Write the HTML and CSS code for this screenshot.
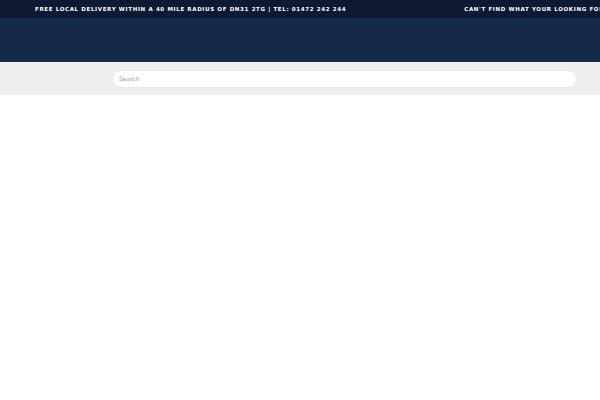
FILE: index.html
```html
<!DOCTYPE html>
<html>
<head>
<meta charset="utf-8">
<link rel="stylesheet" href="styles.css">
</head>
<body>
<div class="topbar">
  <span class="msg">FREE LOCAL DELIVERY WITHIN A 40 MILE RADIUS OF DN31 2TG | TEL: 01472 242 244</span>
  <span class="msg">CAN'T FIND WHAT YOUR LOOKING FOR? CALL US ON 01472 242 244</span>
</div>
<div class="header"></div>
<div class="searchband">
  <div class="searchbox">Search</div>
</div>
</body>
</html>
```
FILE: styles.css
```css
html, body { margin: 0; padding: 0; background: #fff; }
body { font-family: "DejaVu Sans", sans-serif; }
.topbar {
  height: 18px;
  background: #0e1a33;
  display: flex;
  align-items: center;
  gap: 118px;
  padding-left: 35px;
  white-space: nowrap;
  overflow: hidden;
}
.msg {
  color: #fff;
  font-weight: bold;
  font-size: 5.5px;
  letter-spacing: 0.65px;
  flex: none;
}
.header {
  height: 44px;
  background: #152a4a;
}
.searchband {
  height: 33px;
  background: #efefef;
  box-shadow: 0 3px 6px rgba(0,0,0,0.08);
  display: flex;
  align-items: center;
  padding-left: 112px;
  padding-right: 23px;
}
.searchbox {
  flex: 1;
  height: 18px;
  box-sizing: border-box;
  background: #fff;
  border: 1px solid #e6e6e6;
  border-radius: 9px;
  font-size: 6px;
  color: #999;
  display: flex;
  align-items: center;
  padding-left: 6px;
}
```
